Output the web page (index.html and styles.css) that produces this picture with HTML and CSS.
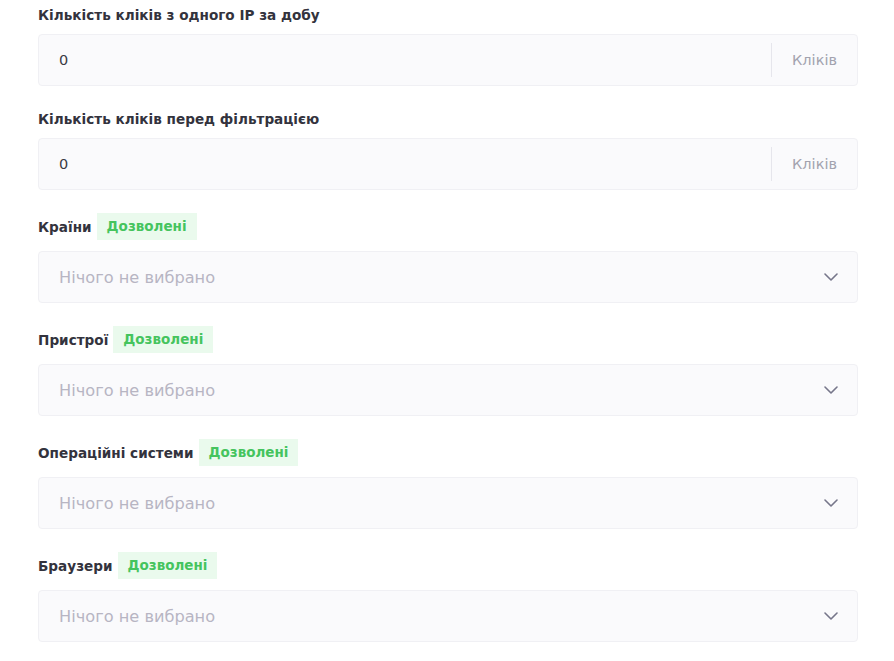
FILE: index.html
```html
<!DOCTYPE html>
<html lang="uk">
<head>
    <meta charset="UTF-8">
    <meta name="viewport" content="width=device-width, initial-scale=1.0">
    <title>Фільтри</title>
    <link rel="stylesheet" href="styles.css">
</head>
<body>
    <div class="filters">
        <div class="form-group">
            <div class="label-row"><label>Кількість кліків з одного IP за добу</label></div>
            <div class="field">
                <input type="text" value="0">
                <span class="suffix">Кліків</span>
            </div>
        </div>
        <div class="form-group">
            <div class="label-row"><label>Кількість кліків перед фільтрацією</label></div>
            <div class="field">
                <input type="text" value="0">
                <span class="suffix">Кліків</span>
            </div>
        </div>
        <div class="form-group">
            <div class="label-row badge-row"><label>Країни</label><span class="badge">Дозволені</span></div>
            <div class="field select">
                <span class="placeholder">Нічого не вибрано</span>
                <svg class="chevron" width="14" height="8" viewBox="0 0 14 8"><path d="M1 1l6 6 6-6" fill="none" stroke="currentColor" stroke-width="1.6" stroke-linecap="round" stroke-linejoin="round"/></svg>
            </div>
        </div>
        <div class="form-group">
            <div class="label-row badge-row"><label>Пристрої</label><span class="badge">Дозволені</span></div>
            <div class="field select">
                <span class="placeholder">Нічого не вибрано</span>
                <svg class="chevron" width="14" height="8" viewBox="0 0 14 8"><path d="M1 1l6 6 6-6" fill="none" stroke="currentColor" stroke-width="1.6" stroke-linecap="round" stroke-linejoin="round"/></svg>
            </div>
        </div>
        <div class="form-group">
            <div class="label-row badge-row"><label>Операційні системи</label><span class="badge">Дозволені</span></div>
            <div class="field select">
                <span class="placeholder">Нічого не вибрано</span>
                <svg class="chevron" width="14" height="8" viewBox="0 0 14 8"><path d="M1 1l6 6 6-6" fill="none" stroke="currentColor" stroke-width="1.6" stroke-linecap="round" stroke-linejoin="round"/></svg>
            </div>
        </div>
        <div class="form-group">
            <div class="label-row badge-row"><label>Браузери</label><span class="badge">Дозволені</span></div>
            <div class="field select">
                <span class="placeholder">Нічого не вибрано</span>
                <svg class="chevron" width="14" height="8" viewBox="0 0 14 8"><path d="M1 1l6 6 6-6" fill="none" stroke="currentColor" stroke-width="1.6" stroke-linecap="round" stroke-linejoin="round"/></svg>
            </div>
        </div>
    </div>
</body>
</html>
```

FILE: styles.css
```css
body {
    margin: 0;
    font-family: 'DejaVu Sans', 'Noto Sans', sans-serif;
    background: #ffffff;
    color: #2e2e38;
}
.filters {
    padding: 5px 36px 0 38px;
}
.form-group {
    margin-bottom: 23px;
}
.label-row {
    display: flex;
    align-items: center;
    gap: 5px;
    height: 20px;
    margin-bottom: 9px;
}
.badge-row {
    height: 27px;
    margin-bottom: 11px;
}
label {
    font-size: 13.6px;
    font-weight: 700;
    color: #33333d;
}
.badge {
    background: #eafaed;
    color: #45c45e;
    font-size: 13.5px;
    font-weight: 700;
    padding: 0 10px;
    height: 27px;
    line-height: 27px;
}
.field {
    display: flex;
    align-items: center;
    height: 52px;
    box-sizing: border-box;
    background: #fafafc;
    border: 1px solid #f0f0f4;
    border-radius: 4px;
}
.field input {
    flex: 1;
    border: none;
    background: transparent;
    font-family: inherit;
    font-size: 14.5px;
    color: #3a3a44;
    padding: 0 20px;
    height: 100%;
    outline: none;
}
.suffix {
    border-left: 1px solid #e6e6ec;
    height: 34px;
    line-height: 34px;
    padding: 0 20px 0 20px;
    font-size: 14.5px;
    color: #a2a2ae;
}
.select {
    justify-content: space-between;
    padding: 0 19px 0 20px;
}
.placeholder {
    font-size: 16.2px;
    color: #b7b5c3;
}
.chevron {
    color: #76768a;
}
```
